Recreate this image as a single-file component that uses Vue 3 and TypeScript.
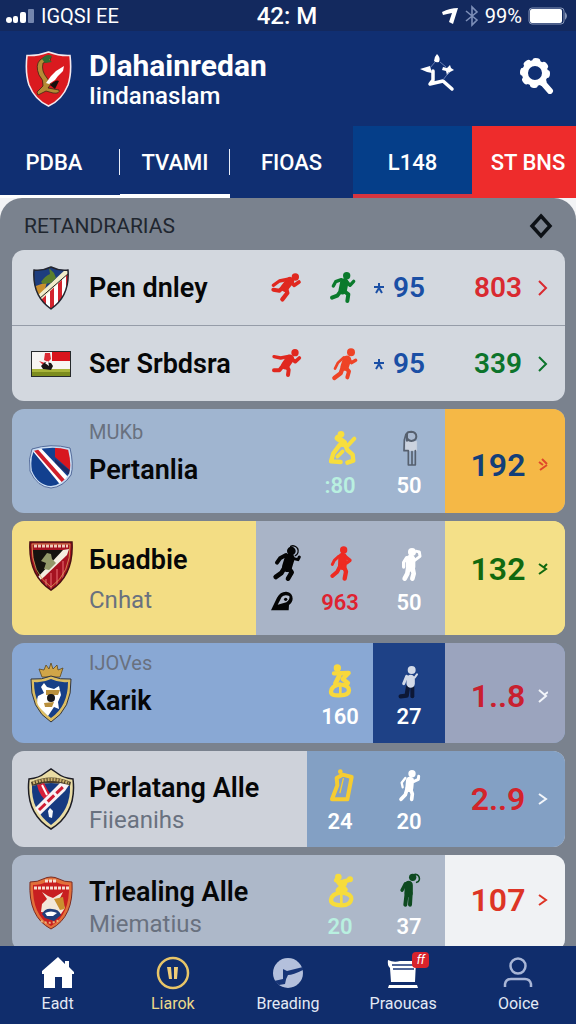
<script setup lang="ts">
import { ref } from 'vue'

interface Limb { d: string; w: number; c?: string; fill?: string }
interface Figure { box: string; color: string; dots: [number, number, number][]; limbs: Limb[] }
interface Stat { figure?: string; value?: string; tone?: string; mark?: boolean }
interface Team {
  id: string
  name: string
  over?: string
  under?: string
  stats: (Stat | null)[]
  score: string
  big: boolean
}

const tabs = ['PDBA', 'TVAMI', 'FIOAS', 'L148', 'ST BNS']
const activeTab = ref(1)

const figures: Record<string, Figure> = {
  sprintRed: {
    box: '49 73 90 108', color: '#e0281f', dots: [[134, 94, 11]],
    limbs: [
      { d: 'M118 106L102 126', w: 24 },
      { d: 'M68 119L86 106L116 100', w: 10 },
      { d: 'M120 108L131 119L145 109', w: 11 },
      { d: 'M98 124L86 135L68 132', w: 12 },
      { d: 'M106 128L110 142L95 161', w: 13 },
    ],
  },
  sprintGreen: {
    box: '225 73 90 108', color: '#0a7a2c', dots: [[290, 90, 11]],
    limbs: [
      { d: 'M283 110L278 134', w: 25 },
      { d: 'M274 102L257 108L250 121', w: 10 },
      { d: 'M288 106L300 119L311 107', w: 10 },
      { d: 'M274 134L262 150L246 156', w: 12 },
      { d: 'M282 136L295 146L292 166', w: 12 },
    ],
  },
  leapRed: {
    box: '49 300 90 108', color: '#e0281f', dots: [[133, 320, 11]],
    limbs: [
      { d: 'M118 338L104 358', w: 25 },
      { d: 'M70 332L90 336L114 331', w: 10 },
      { d: 'M122 338L134 347L146 336', w: 11 },
      { d: 'M98 358L86 373L70 373', w: 12 },
      { d: 'M108 360L114 372L112 387', w: 12 },
    ],
  },
  walkOrange: {
    box: '225 300 90 108', color: '#ee4326', dots: [[303, 319, 12]],
    limbs: [
      { d: 'M291 341L284 362', w: 25 },
      { d: 'M282 334L264 350L255 368', w: 8 },
      { d: 'M296 338L304 350L317 343', w: 10 },
      { d: 'M279 362L272 382L253 396', w: 13 },
      { d: 'M286 364L297 376L292 394', w: 12 },
    ],
  },
  kneelYellow: {
    box: '225 98 90 108', color: '#f7de3e', dots: [[273, 111, 10]],
    limbs: [
      { d: 'M263 122L282 136', w: 18 },
      { d: 'M313 124L294 144L270 142', w: 12 },
      { d: 'M268 144L250 168L243 192L272 194', w: 13 },
      { d: 'M284 138L292 158L308 172L310 190L292 196', w: 13 },
      { d: 'M278 162L262 178', w: 11 },
    ],
  },
  standOutline: {
    box: '432 98 90 108', color: '#56606f', dots: [],
    limbs: [
      { d: 'M466 132H500V160H466Z', w: 2, c: '#ccd3df', fill: '#ccd3df' },
      { d: 'M471 130V108Q473 103 484 103Q499 104 499 118Q498 130 484 131Q471 129 470 117', w: 6, fill: '#a9b9d0' },
      { d: 'M468 110L463 128L462 160H475V203H496V160M486 163V202', w: 5 },
    ],
  },
  throwBlack: {
    box: '49 434 90 108', color: '#050505', dots: [[122, 452, 13]],
    limbs: [
      { d: 'M120 438A14 14 0 1 1 134 466', w: 4 },
      { d: 'M117 474L109 500', w: 30 },
      { d: 'M106 464L88 474L79 487', w: 12 },
      { d: 'M126 474L142 478L146 470', w: 9 },
      { d: 'M103 500L92 518L75 530', w: 14 },
      { d: 'M112 500L123 516L112 535', w: 14 },
    ],
  },
  walkRed: {
    box: '225 434 90 108', color: '#ee2a22', dots: [[281, 449, 11]],
    limbs: [
      { d: 'M278 470L277 496', w: 26 },
      { d: 'M266 468L253 480L247 492', w: 9 },
      { d: 'M288 470L300 480L290 488', w: 10 },
      { d: 'M271 496L262 514L247 527', w: 12 },
      { d: 'M281 498L288 514L284 535', w: 13 },
    ],
  },
  waveWhite: {
    box: '432 434 90 108', color: '#ffffff', dots: [[486, 455, 12]],
    limbs: [
      { d: 'M482 477V500', w: 28 },
      { d: 'M470 472L461 486L461 500', w: 10 },
      { d: 'M494 480L510 468L508 455L500 453', w: 9 },
      { d: 'M475 500L472 520L464 535', w: 14 },
      { d: 'M487 500L491 520L487 535', w: 14 },
    ],
  },
  crouchYellow: {
    box: '117 86 90 108', color: '#f8d83c', dots: [[154, 101, 11]],
    limbs: [
      { d: 'M144 117L188 116L170 134L186 146', w: 13 },
      { d: 'M160 124L148 148', w: 14 },
      { d: 'M162 150Q189 152 189 168Q188 183 162 183Q135 185 135 172Q136 154 162 150', w: 13 },
      { d: 'M163 150V184', w: 8 },
    ],
  },
  guardLight: {
    box: '324 86 90 108', color: '#d3dae8', dots: [[377, 107, 12]],
    limbs: [
      { d: 'M366 158L362 184L344 186', w: 13, c: '#0d1836' },
      { d: 'M379 158V186', w: 12, c: '#0d1836' },
      { d: 'M374 134V148', w: 25 },
      { d: 'M362 126L353 148', w: 9 },
      { d: 'M386 130L393 120', w: 6 },
    ],
  },
  bagYellow: {
    box: '117 400 90 108', color: '#f6cc31', dots: [[163, 411, 7]],
    limbs: [
      { d: 'M152 430L170 420L197 427L184 494H138L154 452Z', w: 12 },
      { d: 'M172 432L162 474', w: 4 },
    ],
  },
  waveSlim: {
    box: '324 400 90 108', color: '#ffffff', dots: [[378, 417, 11]],
    limbs: [
      { d: 'M372 438L370 460', w: 24 },
      { d: 'M358 430L347 444L350 458', w: 7 },
      { d: 'M384 440L397 434L398 425', w: 9 },
      { d: 'M364 460L358 480L345 494', w: 11 },
      { d: 'M373 462L379 478L377 494', w: 11 },
    ],
  },
  bowYellow: {
    box: '117 84 90 108', color: '#f6dc3c', dots: [[157, 96, 10], [192, 103, 9]],
    limbs: [
      { d: 'M150 106L164 112L186 106', w: 13 },
      { d: 'M158 112L178 134L156 136L176 116', w: 15 },
      { d: 'M166 142Q197 146 196 162Q193 181 166 181Q134 181 135 164Q137 146 166 142', w: 13 },
      { d: 'M166 146V180', w: 8 },
    ],
  },
  lookGreen: {
    box: '324 84 90 108', color: '#0e4a20', dots: [[380, 97, 11]],
    limbs: [
      { d: 'M384 89A11 11 0 1 1 392 112', w: 5 },
      { d: 'M368 120V144', w: 25 },
      { d: 'M358 116L348 136', w: 10 },
      { d: 'M362 144L358 179', w: 12 },
      { d: 'M374 146L372 179', w: 12 },
    ],
  },
}

const pair: Team[] = [
  {
    id: 'pen', name: 'Pen dnley', score: '803', big: false,
    stats: [{ figure: 'sprintRed' }, { figure: 'sprintGreen' }, { value: '95', mark: true }],
  },
  {
    id: 'ser', name: 'Ser Srbdsra', score: '339', big: false,
    stats: [{ figure: 'leapRed' }, { figure: 'walkOrange' }, { value: '95', mark: true }],
  },
]

const singles: Team[] = [
  {
    id: 'pert', name: 'Pertanlia', over: 'MUKb', score: '192', big: true,
    stats: [null, { figure: 'kneelYellow', value: ':80', tone: 'mint' }, { figure: 'standOutline', value: '50' }],
  },
  {
    id: 'buad', name: 'Бuadbie', under: 'Cnhat', score: '132', big: true,
    stats: [{ figure: 'throwBlack' }, { figure: 'walkRed', value: '963', tone: 'red' }, { figure: 'waveWhite', value: '50' }],
  },
  {
    id: 'karik', name: 'Karik', over: 'IJOVes', score: '1..8', big: true,
    stats: [null, { figure: 'crouchYellow', value: '160' }, { figure: 'guardLight', value: '27' }],
  },
  {
    id: 'perl', name: 'Perlatang Alle', under: 'Fiieanihs', score: '2..9', big: true,
    stats: [null, { figure: 'bagYellow', value: '24' }, { figure: 'waveSlim', value: '20' }],
  },
  {
    id: 'trl', name: 'Trlealing Alle', under: 'Miematius', score: '107', big: true,
    stats: [null, { figure: 'bowYellow', value: '20', tone: 'mint' }, { figure: 'lookGreen', value: '37' }],
  },
]

const groups: Team[][] = [pair, ...singles.map((t) => [t])]
</script>

<template>
  <div class="app">
    <div class="status">
      <div class="carrier">
        <svg width="29" height="16" viewBox="0 0 29 16" aria-hidden="true">
          <circle cx="3" cy="12" r="3" fill="#fff" />
          <rect x="7" y="8" width="5" height="7" rx="2" fill="#fff" />
          <rect x="14" y="4" width="6" height="11" rx="2" fill="#fff" />
          <rect x="22" y="1" width="6" height="14" rx="1" fill="#7486ae" />
        </svg>
        <span>IGQSI EE</span>
      </div>
      <span class="clock">42: M</span>
      <div class="power">
        <svg width="18" height="18" viewBox="0 0 18 18" aria-hidden="true">
          <path d="M1 5Q9 1 17 1L12 17L8 15L11 6Q6 7 2 8Z" fill="#fff" />
        </svg>
        <svg width="14" height="22" viewBox="0 0 14 22" fill="none" stroke="#7d8fb8" stroke-width="1.6" aria-hidden="true">
          <path d="M1 6L12 15L7 20V2L12 7L1 16" />
        </svg>
        <span>99%</span>
        <svg width="40" height="18" viewBox="0 0 40 18" aria-hidden="true">
          <rect x="1" y="1" width="35" height="16" rx="3" fill="none" stroke="#8796b8" />
          <rect x="2" y="2" width="32" height="14" rx="2" fill="#fff" />
          <path d="M37 5Q41 9 37 13Z" fill="#8796b8" />
        </svg>
      </div>
    </div>

    <header class="head">
      <svg width="47" height="56" viewBox="0 0 47 56" aria-hidden="true">
        <path d="M23.500 1Q34 5 45 4.500Q47 22 43 34Q37 49 23.500 55Q10 49 4 34Q0 22 2 4.500Q13 5 23.500 1Z" fill="#da1a1f" stroke="#f3e9ee" stroke-width="1.600" />
        <path d="M15 9Q21 4 26 6L25 10L18 12Q16 20 22 27L26 33L23 37L34 39Q35 43 28 42L21 40L13 44L12 41L18 35Q19 29 14 24Q10 14 15 9Z" fill="#b58b35" stroke="#3d2a14" stroke-width=".800" />
        <path d="M17 8Q21 2 27 5L24 9L27 11L20 12Z" fill="#2f6b31" />
        <path d="M21 32L26 25L31 20L39 15L38 20L33 25L30 29L24 33Z" fill="#fff" />
        <path d="M25 34Q31 28 34 30L30 38Z" fill="#15110f" />
      </svg>
      <div class="titles">
        <h1>Dlahainredan</h1>
        <p>Iindanaslam</p>
      </div>
      <button type="button" class="icon-btn" aria-label="Favourite">
        <svg width="36" height="38" viewBox="420 53 36 38" aria-hidden="true">
          <path d="M437 53Q441 57 439 61Q436 62 434 60Q434 56 437 53ZM420 68L430 65L432 72L427 71ZM443 66L447 67L450 64L451 67L454 69L450 71L447 74L446 70L442 69Z" fill="#fff" />
          <path d="M433 70V79L430 83L443 80L452 88" fill="none" stroke="#fff" stroke-width="3.500" stroke-linecap="round" stroke-linejoin="round" />
          <path d="M430 67L435 61M440 61L446 66M449 71L443 79" fill="none" stroke="#7d91c0" stroke-width=".800" />
        </svg>
      </button>
      <button type="button" class="icon-btn gear" aria-label="Settings">
        <svg width="36" height="38" viewBox="518 54 36 38" fill="none" stroke="#fff" aria-hidden="true">
          <circle cx="535" cy="71" r="10" stroke-width="6" />
          <circle cx="535" cy="71" r="12" stroke-width="6" stroke-linecap="round" stroke-dasharray="2 7.425" />
          <path d="M543 81L550 89" stroke-width="6" stroke-linecap="round" />
        </svg>
      </button>
    </header>

    <nav class="tabs" aria-label="Sections">
      <button
        v-for="(t, i) in tabs"
        :key="t"
        type="button"
        :class="['tab', 'tab-' + i]"
        :aria-current="activeTab === i ? 'page' : undefined"
        @click="activeTab = i"
      >{{ t }}</button>
    </nav>

    <main class="board">
      <div class="panel">
        <div class="section">
          <h2>RETANDRARIAS</h2>
          <button type="button" class="sort" aria-label="Sort">
            <svg width="24" height="26" viewBox="0 0 24 26" aria-hidden="true">
              <path d="M12 3L21 13L12 23L3 13Z" fill="none" stroke="#0d1116" stroke-width="3.500" />
            </svg>
          </button>
        </div>

        <ul class="list">
          <li v-for="group in groups" :key="group[0].id" :class="['card', 'card-' + group[0].id]">
            <a v-for="team in group" :key="team.id" href="#" :class="['row', 'row-' + team.id]">
              <span class="crest">
                <svg v-if="team.id === 'pen'" width="36" height="44" viewBox="0 0 36 44" aria-hidden="true">
                  <clipPath id="c-pen"><path d="M1 4Q10 5 18 1Q26 5 35 4Q37 30 18 43Q-1 30 1 4Z" /></clipPath>
                  <g clip-path="url(#c-pen)">
                    <rect width="36" height="44" fill="#1d3d7e" />
                    <path d="M0 21L14 16L10 30L0 30Z" fill="#c98f2e" />
                    <path d="M5 32L36 6V44H5Z" fill="#fff" />
                    <path d="M9 29L13 26V44H9ZM17 23L21 19V44H17ZM25 15L29 12V44H25ZM33 8H37V44H33Z" fill="#d3242e" />
                    <path d="M3 31L33 3L36 7L8 34Z" fill="#f1ecca" />
                    <path d="M8 16Q12 10 17 8L16 2L21 7L23 12L18 17L10 18Z" fill="#5b7f2c" />
                    <path d="M6 33L36 7" stroke="#222" fill="none" />
                  </g>
                  <path d="M1 4Q10 5 18 1Q26 5 35 4Q37 30 18 43Q-1 30 1 4Z" fill="none" stroke="#23252f" stroke-width="1.500" />
                </svg>
                <svg v-else-if="team.id === 'ser'" width="40" height="26" viewBox="0 0 40 26" aria-hidden="true">
                  <rect width="40" height="26" fill="#f7f5f3" />
                  <path d="M21 0H40V10H21Z" fill="#d9141c" />
                  <path d="M0 18H40V26H0Z" fill="#7c8c1e" />
                  <path d="M0 18H40V21H0Z" fill="#a8b43a" />
                  <path d="M14 2L19 2L20 8L17 11L13 9ZM8 10L14 12L12 14Z" fill="#dc2a33" />
                  <path d="M10 15L14 11L20 12L22 15L20 19L12 18Z" fill="#1a1414" />
                  <path d="M14 12L17 10L18 15Z" fill="#fff" />
                  <rect x=".500" y=".500" width="39" height="25" fill="none" stroke="#262a2c" />
                </svg>
                <svg v-else-if="team.id === 'pert'" width="44" height="44" viewBox="0 0 44 44" aria-hidden="true">
                  <clipPath id="c-pert"><path d="M4 5Q22 -1 40 4Q44 20 41 29Q34 41 22 42Q8 41 2 26Q0 14 4 5Z" /></clipPath>
                  <g clip-path="url(#c-pert)">
                    <rect width="44" height="44" fill="#12408f" />
                    <path d="M26 0H44V28L26 12Z" fill="#d8161f" />
                    <path d="M26 14L44 28V34L26 18Z" fill="#1c2a63" />
                    <path d="M2 4L8 -1L42 35L34 43Z" fill="#fff" />
                    <path d="M6 4L37 39" stroke="#cf1f2b" stroke-width="4" />
                  </g>
                  <path d="M4 5Q22 -1 40 4Q44 20 41 29Q34 41 22 42Q8 41 2 26Q0 14 4 5Z" fill="none" stroke="#c9dcf2" stroke-width="2" />
                  <path d="M3 4Q22 -2 41 3Q45 20 42 30Q34 42 22 43Q8 42 1 26Q-1 14 3 4Z" fill="none" stroke="#3d568a" stroke-width=".800" />
                </svg>
                <svg v-else-if="team.id === 'buad'" width="44" height="50" viewBox="0 0 44 50" aria-hidden="true">
                  <clipPath id="c-buad"><path d="M1 1H43Q45 34 22 49Q-1 34 1 1Z" /></clipPath>
                  <g clip-path="url(#c-buad)">
                    <rect width="44" height="50" fill="#a51220" />
                    <path d="M4 9H37L12 38Q5 30 4 9Z" fill="#15130f" />
                    <path d="M9 36L34 9L40 8L38 14L15 36L10 40Z" fill="#f3eee0" />
                    <path d="M12 20L18 12L22 13L23 18L27 22L20 29L15 28L17 22Z" fill="#93996a" />
                    <path d="M17 38V46M22 32V48M28 28V44M34 20V38" stroke="#d4505a" stroke-width="1.500" />
                    <path d="M5 5H39" stroke="#efc9b9" stroke-width="3" stroke-dasharray="3 1" />
                  </g>
                  <path d="M1 1H43Q45 34 22 49Q-1 34 1 1Z" fill="none" stroke="#4c1014" stroke-width="1.500" />
                  <path d="M3 3H41Q42 32 22 46Q2 32 3 3Z" fill="none" stroke="#d9a35b" stroke-width=".800" />
                </svg>
                <svg v-else-if="team.id === 'karik'" width="42" height="60" viewBox="0 0 42 60" aria-hidden="true">
                  <path d="M12 14L9 6L14 7L16 2L19 6L21 0L23 6L27 2L28 7L33 5L30 14Z" fill="#d0a548" stroke="#5d4720" stroke-width=".800" />
                  <path d="M1 16Q12 17 21 13Q30 17 41 16Q42 46 21 59Q0 46 1 16Z" fill="#dcbd62" stroke="#31353f" stroke-width="1" />
                  <path d="M4 19Q13 20 21 16Q29 20 38 19Q38 43 21 55Q4 43 4 19Z" fill="#173f87" />
                  <path d="M11 24L14 20L17 24L24 26L29 23L31 32L28 39L29 46L24 44L18 53L11 46Q5 40 8 33L14 30Z" fill="#fff" />
                  <path d="M16 27H30L28 32H16ZM14 40L24 39L22 44H15Z" fill="#b88f3c" />
                  <circle cx="21" cy="35" r="4" fill="#15161d" />
                </svg>
                <svg v-else-if="team.id === 'perl'" width="48" height="62" viewBox="0 0 48 62" aria-hidden="true">
                  <path d="M2 11Q12 10 18 5L24 1L30 5Q36 10 46 11Q50 45 24 61Q-2 45 2 11Z" fill="#e9dca4" stroke="#1d1d25" stroke-width="1.500" />
                  <path d="M4 14Q24 5 44 14L43 18Q24 12 5 18Z" fill="#4b3d28" />
                  <path d="M6 15Q24 8 42 15" fill="none" stroke="#cbb26c" stroke-width="3" stroke-dasharray="2 1" />
                  <path d="M5 18Q24 12 43 18Q44 42 24 57Q4 42 5 18Z" fill="#163a80" />
                  <path d="M10 17L17 15Q20 22 26 29L21 35Q12 27 10 17Z" fill="#d8223a" />
                  <path d="M15 17L20 27" stroke="#fff" stroke-width="2" />
                  <path d="M8 40L33 15L42 17L38 23L13 47Z" fill="#f7f2f4" />
                  <path d="M12 42L37 18" stroke="#cf1d33" stroke-width="3" stroke-dasharray="9 3" />
                  <path d="M23 40L26 43L25 50L22 49L21 43Z" fill="#f4f6fa" />
                </svg>
                <svg v-else width="44" height="54" viewBox="0 0 44 54" aria-hidden="true">
                  <path d="M1 6Q9 6 14 3Q22 -1 30 3Q35 6 43 6Q45 41 22 53Q-1 41 1 6Z" fill="#e2703a" stroke="#7a2c22" stroke-width="1" />
                  <path d="M4 9Q12 9 17 6Q22 3 27 6Q32 9 40 9Q41 39 22 50Q3 39 4 9Z" fill="#c81f20" />
                  <path d="M16 5H28M5 12H40" stroke="#f6dfd2" stroke-width="3" stroke-dasharray="3 1" />
                  <path d="M13 16L19 20L24 22L34 16L31 22L36 32L32 38L12 36L13 28L18 23Z" fill="#f2e7d9" />
                  <path d="M25 23L34 21L36 33L31 34Z" fill="#c9902f" />
                  <path d="M13 38Q16 32 23 33Q30 33 32 39L25 45L16 42Z" fill="#203f7c" />
                  <path d="M16 37Q22 34 28 37L24 40H18Z" fill="#fff" />
                  <path d="M12 45Q20 49 31 44" stroke="#e7b37b" stroke-width="2" stroke-dasharray="2 2" fill="none" />
                </svg>
              </span>

              <span class="team">
                <span v-if="team.over" class="sub over">{{ team.over }}</span>
                <span class="name">{{ team.name }}</span>
                <span v-if="team.under" class="sub">{{ team.under }}</span>
              </span>

              <span v-for="(stat, n) in team.stats" :key="n" :class="['stat', 'stat-' + n, stat?.mark && 'marked']">
                <svg
                  v-if="stat?.figure"
                  class="figure"
                  :viewBox="figures[stat.figure].box"
                  fill="none"
                  stroke-linecap="round"
                  stroke-linejoin="round"
                  aria-hidden="true"
                >
                  <path
                    v-for="limb in figures[stat.figure].limbs"
                    :key="limb.d"
                    :d="limb.d"
                    :stroke="limb.c ?? figures[stat.figure].color"
                    :stroke-width="limb.w"
                    :fill="limb.fill ?? 'none'"
                  />
                  <circle
                    v-for="dot in figures[stat.figure].dots"
                    :key="dot[0]"
                    :cx="dot[0]"
                    :cy="dot[1]"
                    :r="dot[2]"
                    :fill="figures[stat.figure].color"
                  />
                </svg>
                <svg v-if="stat?.figure === 'throwBlack'" class="helmet" width="22" height="20" viewBox="66 577 66 60" aria-hidden="true">
                  <path d="M66 635L84 597Q94 578 112 579Q131 582 131 600Q130 612 120 619L119 635Z" fill="#050505" />
                  <path d="M86 618L98 595Q106 587 121 592Q124 602 112 611Z" fill="#b4bccb" />
                  <circle cx="110" cy="602" r="5" fill="#050505" />
                </svg>
                <svg v-if="stat?.mark" width="12" height="12" viewBox="0 0 12 12" stroke="#1a4fa5" stroke-width="2" aria-hidden="true">
                  <path d="M6 1V7M1 5H11M3 11L6 6L9 11" fill="none" />
                </svg>
                <span v-if="stat?.value" :class="['num', stat.tone]">{{ stat.value }}</span>
              </span>

              <span class="score">
                <span class="value">{{ team.score }}</span>
                <svg class="chev" width="10" height="16" viewBox="0 0 10 16" fill="none" stroke="currentColor" stroke-width="2" aria-hidden="true">
                  <path v-if="team.id === 'pert'" d="M4 2L9 7M1 5L5 8M9 8L2 13" />
                  <path v-else-if="team.id === 'buad'" d="M1 3L8 8L1 13M6 6L9 3" />
                  <path v-else-if="team.id === 'karik'" d="M1 2L8 8L1 14M6 7L10 4" />
                  <path v-else-if="team.big" d="M1 3L8 8L1 13" />
                  <path v-else d="M1 1L8 8L1 15" />
                </svg>
              </span>
            </a>
          </li>
        </ul>
      </div>
    </main>

    <nav class="bottom" aria-label="Main">
      <a href="#">
        <svg width="34" height="34" viewBox="0 0 34 34" aria-hidden="true">
          <path d="M17 1L24 8V5H28V11L33 16V18H31V32H21V21H14V32H3V18H1V15Z" fill="#fff" />
        </svg>
        <span>Eadt</span>
      </a>
      <a href="#" class="current">
        <svg width="34" height="34" viewBox="0 0 34 34" aria-hidden="true">
          <circle cx="17" cy="17" r="15" fill="none" stroke="#e8c568" stroke-width="2.500" />
          <path d="M11 11H15L16 23H13ZM18 11H22L21 23H18Z" fill="#f0cd78" />
        </svg>
        <span>Liarok</span>
      </a>
      <a href="#">
        <svg width="34" height="34" viewBox="0 0 34 34" aria-hidden="true">
          <circle cx="17" cy="17" r="15" fill="#b4c0dc" />
          <path d="M12 13L16 15L32 11V14Q22 19 17 19Q15 22 14 28L8 29L3 25L12 23Z" fill="#173577" />
        </svg>
        <span>Breading</span>
      </a>
      <a href="#">
        <span class="badged">
          <svg width="34" height="34" viewBox="0 0 34 34" aria-hidden="true">
            <path d="M2 4Q8 7 14 5H30L29 26H5L4 12Q1 9 2 4Z" fill="#fff" />
            <path d="M6 9H27M7 13H28" stroke="#173577" stroke-width="1.500" />
            <path d="M3 29H31L32 32H2Z" fill="#fff" />
          </svg>
          <i class="badge">ff</i>
        </span>
        <span>Praoucas</span>
      </a>
      <a href="#">
        <svg width="34" height="34" viewBox="0 0 34 34" fill="none" stroke="#a9b6d6" stroke-width="2.500" aria-hidden="true">
          <circle cx="17" cy="10" r="7.500" />
          <path d="M4 31V28Q5 23 10 23H24Q29 23 30 28V31" />
        </svg>
        <span>Ooice</span>
      </a>
    </nav>
  </div>
</template>

<style>
body {
  margin: 0;
  background: #f2f3f5;
}
</style>

<style scoped>
.app {
  display: flex;
  flex-direction: column;
  height: 100vh;
  overflow: hidden;
  font-family: Roboto, "Liberation Sans", sans-serif;
  color: #fff;
}
button {
  border: 0;
  padding: 0;
  background: none;
  font: inherit;
  color: inherit;
  cursor: pointer;
}
a {
  color: inherit;
  text-decoration: none;
}
svg {
  display: block;
  flex: none;
}
.status {
  display: grid;
  grid-template-columns: 1fr auto 1fr;
  align-items: center;
  height: 31px;
  padding: 0 8px 0 6px;
  box-sizing: border-box;
  background: #13295e;
  font-size: 20px;
  line-height: 28px;
}
.carrier,
.power {
  display: flex;
  align-items: center;
  gap: 6px;
}
.power {
  justify-content: flex-end;
}
.clock {
  font-size: 24px;
  font-weight: 500;
}
.head {
  display: flex;
  align-items: center;
  height: 95px;
  padding: 0 22px 0 25px;
  box-sizing: border-box;
  background: #102f72;
}
.titles {
  flex: 1;
  margin-left: 17px;
  padding-top: 4px;
}
h1,
h2,
p {
  margin: 0;
}
h1 {
  font-size: 30px;
  line-height: 30px;
  font-weight: 700;
}
.titles p {
  font-size: 24px;
  line-height: 30px;
  font-weight: 500;
}
.icon-btn {
  margin-bottom: 12px;
}
.gear {
  margin: 0 0 8px 62px;
}
.tabs {
  display: grid;
  grid-template-columns: 120fr 110fr 123fr 119fr 104fr;
  height: 72px;
  background: #102f72;
}
.tab {
  position: relative;
  padding-top: 4px;
  font-size: 22px;
  font-weight: 500;
}
.tab-0 {
  padding-right: 12px;
  border-bottom: 3px solid #fff;
}
.tab-1 {
  border-bottom: 4px solid #fff;
}
.tab-2 {
  padding-top: 0;
}
.tab-0::after,
.tab-1::after {
  content: "";
  position: absolute;
  right: 0;
  top: 23px;
  width: 1px;
  height: 26px;
  background: #e8edf8;
}
.tab-3 {
  background: #053e89;
  border-bottom: 4px solid #d6353f;
}
.tab-4 {
  padding: 0 0 0 8px;
  background: #ee2c2c;
}
.board {
  flex: 1;
  min-height: 0;
  overflow: hidden;
}
.panel {
  min-height: 100%;
  padding: 0 11px 0 12px;
  border-radius: 22px 22px 0 0;
  background: #7a828e;
}
.section {
  display: flex;
  align-items: center;
  justify-content: space-between;
  height: 52px;
  padding: 4px 12px 0;
  box-sizing: border-box;
  color: #20262f;
}
h2 {
  font-size: 21px;
  line-height: 28px;
  font-weight: 400;
}
.list {
  display: flex;
  flex-direction: column;
  gap: 8px;
  margin: 0;
  padding: 0;
  list-style: none;
}
.card {
  display: grid;
  border-radius: 12px;
  overflow: hidden;
}
.row {
  display: grid;
  grid-template-columns: 77px minmax(0, 1fr) 51px 66px 72px 120px;
  min-height: 96px;
}
.crest {
  display: flex;
  align-items: center;
  justify-content: center;
}
.team {
  display: flex;
  flex-direction: column;
  justify-content: center;
  color: #060708;
  white-space: nowrap;
}
.name {
  font-size: 27px;
  line-height: 32px;
  font-weight: 600;
}
.sub {
  font-size: 24px;
  line-height: 32px;
  color: #69717f;
}
.over {
  font-size: 20px;
}
.stat {
  display: flex;
  flex-direction: column;
  align-items: center;
  justify-content: center;
  gap: 6px;
  padding-top: 6px;
}
.figure {
  width: 30px;
  height: 36px;
  overflow: visible;
}
.num {
  font-size: 22px;
  line-height: 24px;
  font-weight: 600;
}
.num.mint {
  color: #b9f0e0;
}
.num.red {
  color: #df2230;
}
.marked {
  flex-direction: row;
  justify-content: flex-start;
  gap: 8px;
}
.marked .num {
  color: #1a4fa5;
  font-size: 28px;
  line-height: 32px;
}
.score {
  display: flex;
  align-items: center;
  padding-left: 15px;
  gap: 2px;
}
.value {
  width: 76px;
  text-align: center;
  font-size: 28px;
  line-height: 36px;
  font-weight: 600;
}
.card:not(.card-pen) .value {
  font-size: 32px;
}
.card-pen {
  background: #d3d8df;
}
.card-pen .row {
  min-height: 75px;
}
.card-pen .stat {
  padding-top: 0;
}
.row-ser {
  border-top: 1px solid #959ca8;
}
.row-pen .score {
  color: #d92a30;
}
.row-ser .score {
  color: #0c742b;
}
.card-pert {
  background: #a0b5d0;
}
.row-pert {
  min-height: 104px;
}
.row-pert .crest {
  padding-top: 12px;
}
.row-pert .team,
.row-karik .team {
  justify-content: flex-start;
  padding-top: 7px;
  gap: 6px;
}
.row-pert .stat {
  gap: 8px;
}
.row-pert .score {
  background: #f5b846;
  color: #123f79;
  padding-top: 8px;
}
.row-pert .chev {
  color: #e0482a;
}
.card-buad {
  background: #f3dd84;
}
.row-buad {
  min-height: 114px;
}
.row-buad .crest {
  padding-bottom: 24px;
}
.row-buad .team {
  gap: 8px;
  padding-top: 4px;
}
.row-buad .stat {
  gap: 10px;
  padding-top: 4px;
  background: #a9b4c7;
}
.row-buad .score {
  background: #f4e088;
  color: #11690f;
  padding-bottom: 18px;
}
.helmet {
  margin-bottom: 4px;
}
.card-karik {
  background: #89a8d4;
}
.row-karik {
  min-height: 100px;
}
.row-karik .team {
  padding-top: 4px;
}
.row-karik .stat-2 {
  background: #1e4186;
}
.row-karik .score {
  background: #9ba4be;
  color: #c9202f;
  padding-top: 6px;
}
.row-karik .chev,
.row-perl .chev {
  color: #f2f5fa;
}
.card-perl {
  background: #ced2da;
}
.row-perl .stat-1,
.row-perl .stat-2,
.row-perl .score {
  background: #83a0c4;
}
.row-perl .team,
.row-trl .team {
  padding-top: 9px;
}
.row-perl .stat {
  padding-top: 3px;
}
.row-perl .score {
  color: #d3232a;
}
.card-trl {
  background: #adb8c9;
}
.row-trl .score {
  background: #f0f2f4;
  color: #dd3526;
  padding-bottom: 6px;
}
.bottom {
  display: grid;
  grid-template-columns: repeat(5, 1fr);
  height: 78px;
  flex: none;
  background: #102d6c;
}
.bottom a {
  display: flex;
  flex-direction: column;
  align-items: center;
  padding-top: 10px;
  gap: 4px;
  font-size: 16px;
  line-height: 20px;
  color: #e3e9f5;
}
.bottom .current {
  color: #ecd98a;
}
.badged {
  position: relative;
}
.badge {
  position: absolute;
  top: -4px;
  right: -9px;
  width: 17px;
  height: 16px;
  border-radius: 4px;
  background: #d8232c;
  color: #fff;
  font-size: 12px;
  line-height: 16px;
  text-align: center;
}
</style>
